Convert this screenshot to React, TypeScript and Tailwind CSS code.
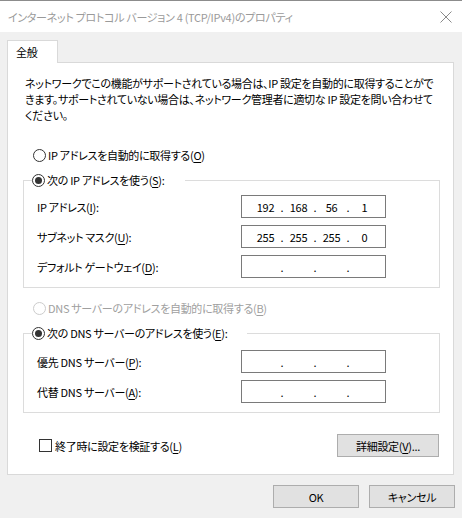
import React from 'react';

const font = "font-['Noto_Sans_CJK_JP',sans-serif] [font-feature-settings:'palt'] tracking-[-0.3px]";

function Acc({ k }: { k: string }) {
  return (
    <>
      (<span className="underline underline-offset-2">{k}</span>)
    </>
  );
}

function Radio({ checked, disabled }: { checked?: boolean; disabled?: boolean }) {
  return (
    <span
      className={`flex h-[13px] w-[13px] shrink-0 items-center justify-center rounded-full border ${
        disabled ? 'border-[#cccccc]' : 'border-[#333333]'
      }`}
    >
      {checked && <span className="h-[7px] w-[7px] rounded-full bg-[#333333]" />}
    </span>
  );
}

function IpBox({ parts }: { parts?: string[] }) {
  const p = parts ?? ['', '', '', ''];
  return (
    <div className="flex h-[23px] w-[145px] items-center border border-[#7a7a7a] bg-white pl-[9px] text-black">
      {p.map((v, i) => (
        <React.Fragment key={i}>
          <span className="w-[29px] text-center">{v}</span>
          {i < 3 && <span className="w-[4px] text-center">.</span>}
        </React.Fragment>
      ))}
    </div>
  );
}

function Row({ label, parts }: { label: React.ReactNode; parts?: string[] }) {
  return (
    <div className="flex items-center justify-between">
      <span>{label}</span>
      <IpBox parts={parts} />
    </div>
  );
}

function Button({ children, w }: { children: React.ReactNode; w: string }) {
  return (
    <button className={`flex h-[23px] ${w} items-center justify-center border border-[#adadad] bg-[#e1e1e1] text-black`}>
      {children}
    </button>
  );
}

export default function App() {
  return (
    <div className={`flex h-[518px] w-[462px] flex-col overflow-hidden bg-[#f0f0f0] text-[11px] leading-[16px] text-black ${font}`}>
      <div className="h-px bg-[#8c8c8c]" />
      <div className="flex h-[31px] items-center justify-between bg-white pl-[8px] pr-[9px]">
        <span className="text-[#9a9a9a]">インターネット プロトコル バージョン 4 (TCP/IPv4)のプロパティ</span>
        <svg width="12" height="12" viewBox="0 0 12 12" className="mr-[1px]">
          <path d="M0.5 0.5 L11.5 11.5 M11.5 0.5 L0.5 11.5" stroke="#8a8a8a" strokeWidth="1" />
        </svg>
      </div>

      <div className="flex flex-1 flex-col pl-[7px] pr-[8px] pt-[8px]">
        <div className="relative z-10 -mb-px flex h-[23px] w-[51px] items-center border border-b-0 border-[#d9d9d9] bg-white pl-[8px]">
          全般
        </div>
        <div className="flex h-[413px] flex-col border border-[#d9d9d9] bg-white pl-[15px] pr-[13px] pt-[12px]">
          <p className="pl-[2px]">
            ネットワークでこの機能がサポートされている場合は、IP 設定を自動的に取得することがで
            <br />
            きます。サポートされていない場合は、ネットワーク管理者に適切な IP 設定を問い合わせて
            <br />
            ください。
          </p>

          <label className="mt-[22px] flex h-[20px] items-center gap-[2px] pl-[10px]">
            <Radio />
            <span>
              IP アドレスを自動的に取得する<Acc k="O" />
            </span>
          </label>

          <fieldset className="mt-[5px] border border-[#dcdcdc] px-[13px] pb-[9px] pt-[5px]">
            <legend className="-ml-[5px] flex h-[20px] items-center gap-[2px] pr-[20px]">
              <Radio checked />
              <span>
                次の IP アドレスを使う<Acc k="S" />:
              </span>
            </legend>
            <div className="flex flex-col gap-[7px] pr-[40px]">
              <Row label={<>IP アドレス<Acc k="I" />:</>} parts={['192', '168', '56', '1']} />
              <Row label={<>サブネット マスク<Acc k="U" />:</>} parts={['255', '255', '255', '0']} />
              <Row label={<>デフォルト ゲートウェイ<Acc k="D" />:</>} />
            </div>
          </fieldset>

          <label className="mt-[10px] flex h-[20px] items-center gap-[2px] pl-[10px] text-[#a0a0a0]">
            <Radio disabled />
            <span>
              DNS サーバーのアドレスを自動的に取得する<Acc k="B" />
            </span>
          </label>

          <fieldset className="mt-[5px] border border-[#dcdcdc] px-[13px] pb-[9px] pt-[7px]">
            <legend className="-ml-[5px] flex h-[20px] items-center gap-[2px] pr-[20px]">
              <Radio checked />
              <span>
                次の DNS サーバーのアドレスを使う<Acc k="E" />:
              </span>
            </legend>
            <div className="flex flex-col gap-[7px] pr-[40px]">
              <Row label={<>優先 DNS サーバー<Acc k="P" />:</>} />
              <Row label={<>代替 DNS サーバー<Acc k="A" />:</>} />
            </div>
          </fieldset>

          <div className="mt-[21px] flex items-center justify-between pl-[16px] pr-[1px]">
            <label className="flex items-center gap-[3px]">
              <span className="h-[13px] w-[13px] border border-[#333333]" />
              <span>
                終了時に設定を検証する<Acc k="L" />
              </span>
            </label>
            <Button w="w-[102px]">
              詳細設定<Acc k="V" />...
            </Button>
          </div>
        </div>

        <div className="-mr-px mt-[10px] flex justify-end gap-[10px]">
          <Button w="w-[86px]">OK</Button>
          <Button w="w-[86px]">キャンセル</Button>
        </div>
      </div>
    </div>
  );
}
